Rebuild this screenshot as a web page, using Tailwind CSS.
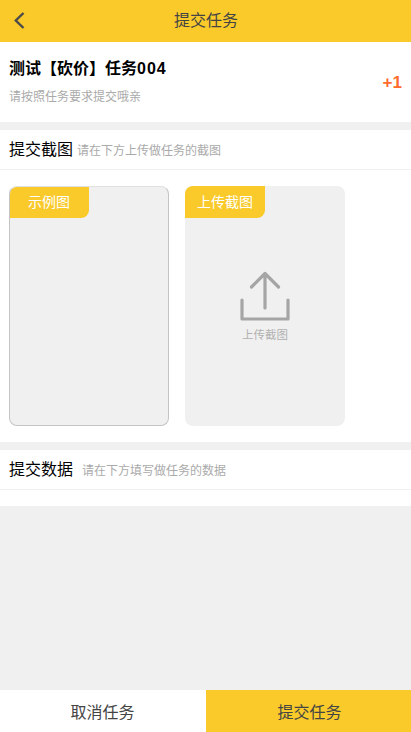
<!DOCTYPE html>
<html lang="zh">
<head>
<meta charset="utf-8">
<script src="https://cdn.jsdelivr.net/npm/@tailwindcss/browser@4"></script>
</head>
<body class="bg-white">
<div class="w-[411px] h-[732px] flex flex-col overflow-hidden bg-white font-['Liberation_Sans','Noto_Sans_CJK_SC',sans-serif]">
  <header class="relative h-[42px] shrink-0 bg-[#f9ca2a] flex items-center justify-center text-[16px] text-[#444]">
    <svg class="absolute left-[14px] top-[12px] w-[11px] h-[17px]" viewBox="0 0 11 17" fill="none"><path d="M9.5 1 L1.8 8.5 L9.5 16" stroke="#4a4a4a" stroke-width="2.4"/></svg>
    <span class="ml-[1px]">提交任务</span>
  </header>
  <section class="h-[80px] shrink-0 flex items-center justify-between pl-[9px] pr-[9px]">
    <div class="flex flex-col">
      <div class="text-[16px] leading-[20px] font-bold text-black">测试【砍价】任务<span class="tracking-[1px]">004</span></div>
      <div class="mt-[10px] text-[12px] leading-[16px] text-[#aaa]">请按照任务要求提交哦亲</div>
    </div>
    <div class="text-[17px] font-bold text-[#ff6b2c] mt-[2px]">+1</div>
  </section>
  <div class="h-[8px] shrink-0 bg-[#f0f0f0]"></div>
  <div class="h-[40px] shrink-0 flex items-center pl-[9px] pt-[1px] border-b border-[#f0f0f0]">
    <span class="text-[16px] text-black">提交截图</span>
    <span class="ml-[4px] text-[12px] text-[#aaa] mt-[2px]">请在下方上传做任务的截图</span>
  </div>
  <div class="h-[272px] shrink-0 flex pl-[9px] gap-[16px] pt-[16px]">
    <div class="relative w-[160px] h-[240px] rounded-[8px] bg-[#f0f0f0] border border-[#c4c4c4] border-t-[#e0e0e0] overflow-hidden">
      <div class="absolute -left-px -top-px w-[80px] h-[32px] bg-[#f9ca2a] rounded-br-[8px] flex items-center justify-center text-[14px] text-white">示例图</div>
    </div>
    <div class="relative w-[160px] h-[240px] rounded-[8px] bg-[#f0f0f0] overflow-hidden flex flex-col items-center">
      <div class="absolute left-0 top-0 w-[80px] h-[32px] bg-[#f9ca2a] rounded-br-[8px] flex items-center justify-center text-[14px] text-white">上传截图</div>
      <svg class="mt-[85px] w-[50px] h-[50px]" viewBox="0 0 50 50" fill="none"><path d="M25 37 V2.5 M11.5 16 L25 2.5 L38.5 16 M2 29 V48 H48 V29" stroke="#a5a5a5" stroke-width="3.2" stroke-linecap="round" stroke-linejoin="round"/></svg>
      <div class="mt-[6px] text-[11.5px] leading-[16px] text-[#b0b0b0]">上传截图</div>
    </div>
  </div>
  <div class="h-[8px] shrink-0 bg-[#f0f0f0]"></div>
  <div class="h-[40px] shrink-0 flex items-center pl-[9px] border-b border-[#f0f0f0]">
    <span class="text-[16px] text-black">提交数据</span>
    <span class="ml-[9px] text-[12px] text-[#aaa] mt-[2px]">请在下方填写做任务的数据</span>
  </div>
  <div class="h-[16px] shrink-0"></div>
  <div class="flex-1 bg-[#f0f0f0]"></div>
  <footer class="h-[42px] shrink-0 flex text-[16px] text-[#444]">
    <button class="w-[206px] bg-white pt-[3px] pr-[1px]">取消任务</button>
    <button class="flex-1 bg-[#f9ca2a] pt-[3px] pl-[2px]">提交任务</button>
  </footer>
</div>
</body>
</html>
